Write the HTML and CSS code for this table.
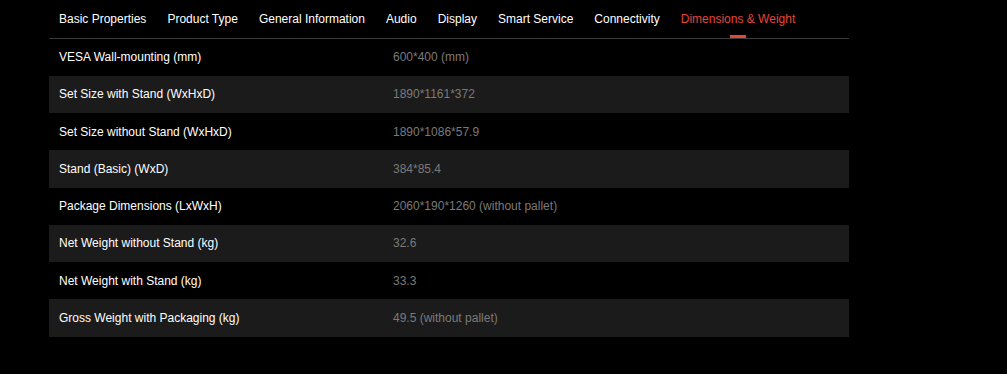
FILE: index.html
```html
<!DOCTYPE html>
<html>
<head>
<meta charset="utf-8">
<link rel="stylesheet" href="styles.css">
</head>
<body>
<div class="specs">
  <nav class="tabs">
    <span class="tab">Basic Properties</span>
    <span class="tab">Product Type</span>
    <span class="tab">General Information</span>
    <span class="tab">Audio</span>
    <span class="tab">Display</span>
    <span class="tab">Smart Service</span>
    <span class="tab">Connectivity</span>
    <span class="tab active">Dimensions &amp; Weight</span>
  </nav>
  <div class="table">
    <div class="row"><span class="label">VESA Wall-mounting (mm)</span><span class="value">600*400 (mm)</span></div>
    <div class="row"><span class="label">Set Size with Stand (WxHxD)</span><span class="value">1890*1161*372</span></div>
    <div class="row"><span class="label">Set Size without Stand (WxHxD)</span><span class="value">1890*1086*57.9</span></div>
    <div class="row"><span class="label">Stand (Basic) (WxD)</span><span class="value">384*85.4</span></div>
    <div class="row"><span class="label">Package Dimensions (LxWxH)</span><span class="value">2060*190*1260 (without pallet)</span></div>
    <div class="row"><span class="label">Net Weight without Stand (kg)</span><span class="value">32.6</span></div>
    <div class="row"><span class="label">Net Weight with Stand (kg)</span><span class="value">33.3</span></div>
    <div class="row"><span class="label">Gross Weight with Packaging (kg)</span><span class="value">49.5 (without pallet)</span></div>
  </div>
</div>
</body>
</html>
```

FILE: styles.css
```css
html, body {
  margin: 0;
  padding: 0;
  background: #000;
  font-family: "Liberation Sans", Arial, sans-serif;
  font-size: 12px;
  color: #fff;
}
.specs {
  width: 800px;
  margin-left: 49px;
}
.tabs {
  display: flex;
  gap: 21px;
  padding: 0 10px;
  height: 38.5px;
  border-bottom: 1px solid #3a3a3a;
  box-sizing: border-box;
  align-items: stretch;
}
.tab {
  position: relative;
  display: flex;
  align-items: center;
  color: #fff;
  white-space: nowrap;
  line-height: 14px;
}
.tab.active {
  color: #e5463b;
}
.tab.active::after {
  content: "";
  position: absolute;
  left: 50%;
  margin-left: -8px;
  width: 16px;
  height: 3px;
  bottom: 0;
  background: #e5463b;
}
.row {
  display: grid;
  grid-template-columns: 334px 1fr;
  align-items: center;
  height: 37.25px;
  padding: 0 10px;
}
.row:nth-child(even) {
  background: #1b1b1b;
}
.label {
  color: #fff;
}
.value {
  color: #7a7a7a;
}
```
